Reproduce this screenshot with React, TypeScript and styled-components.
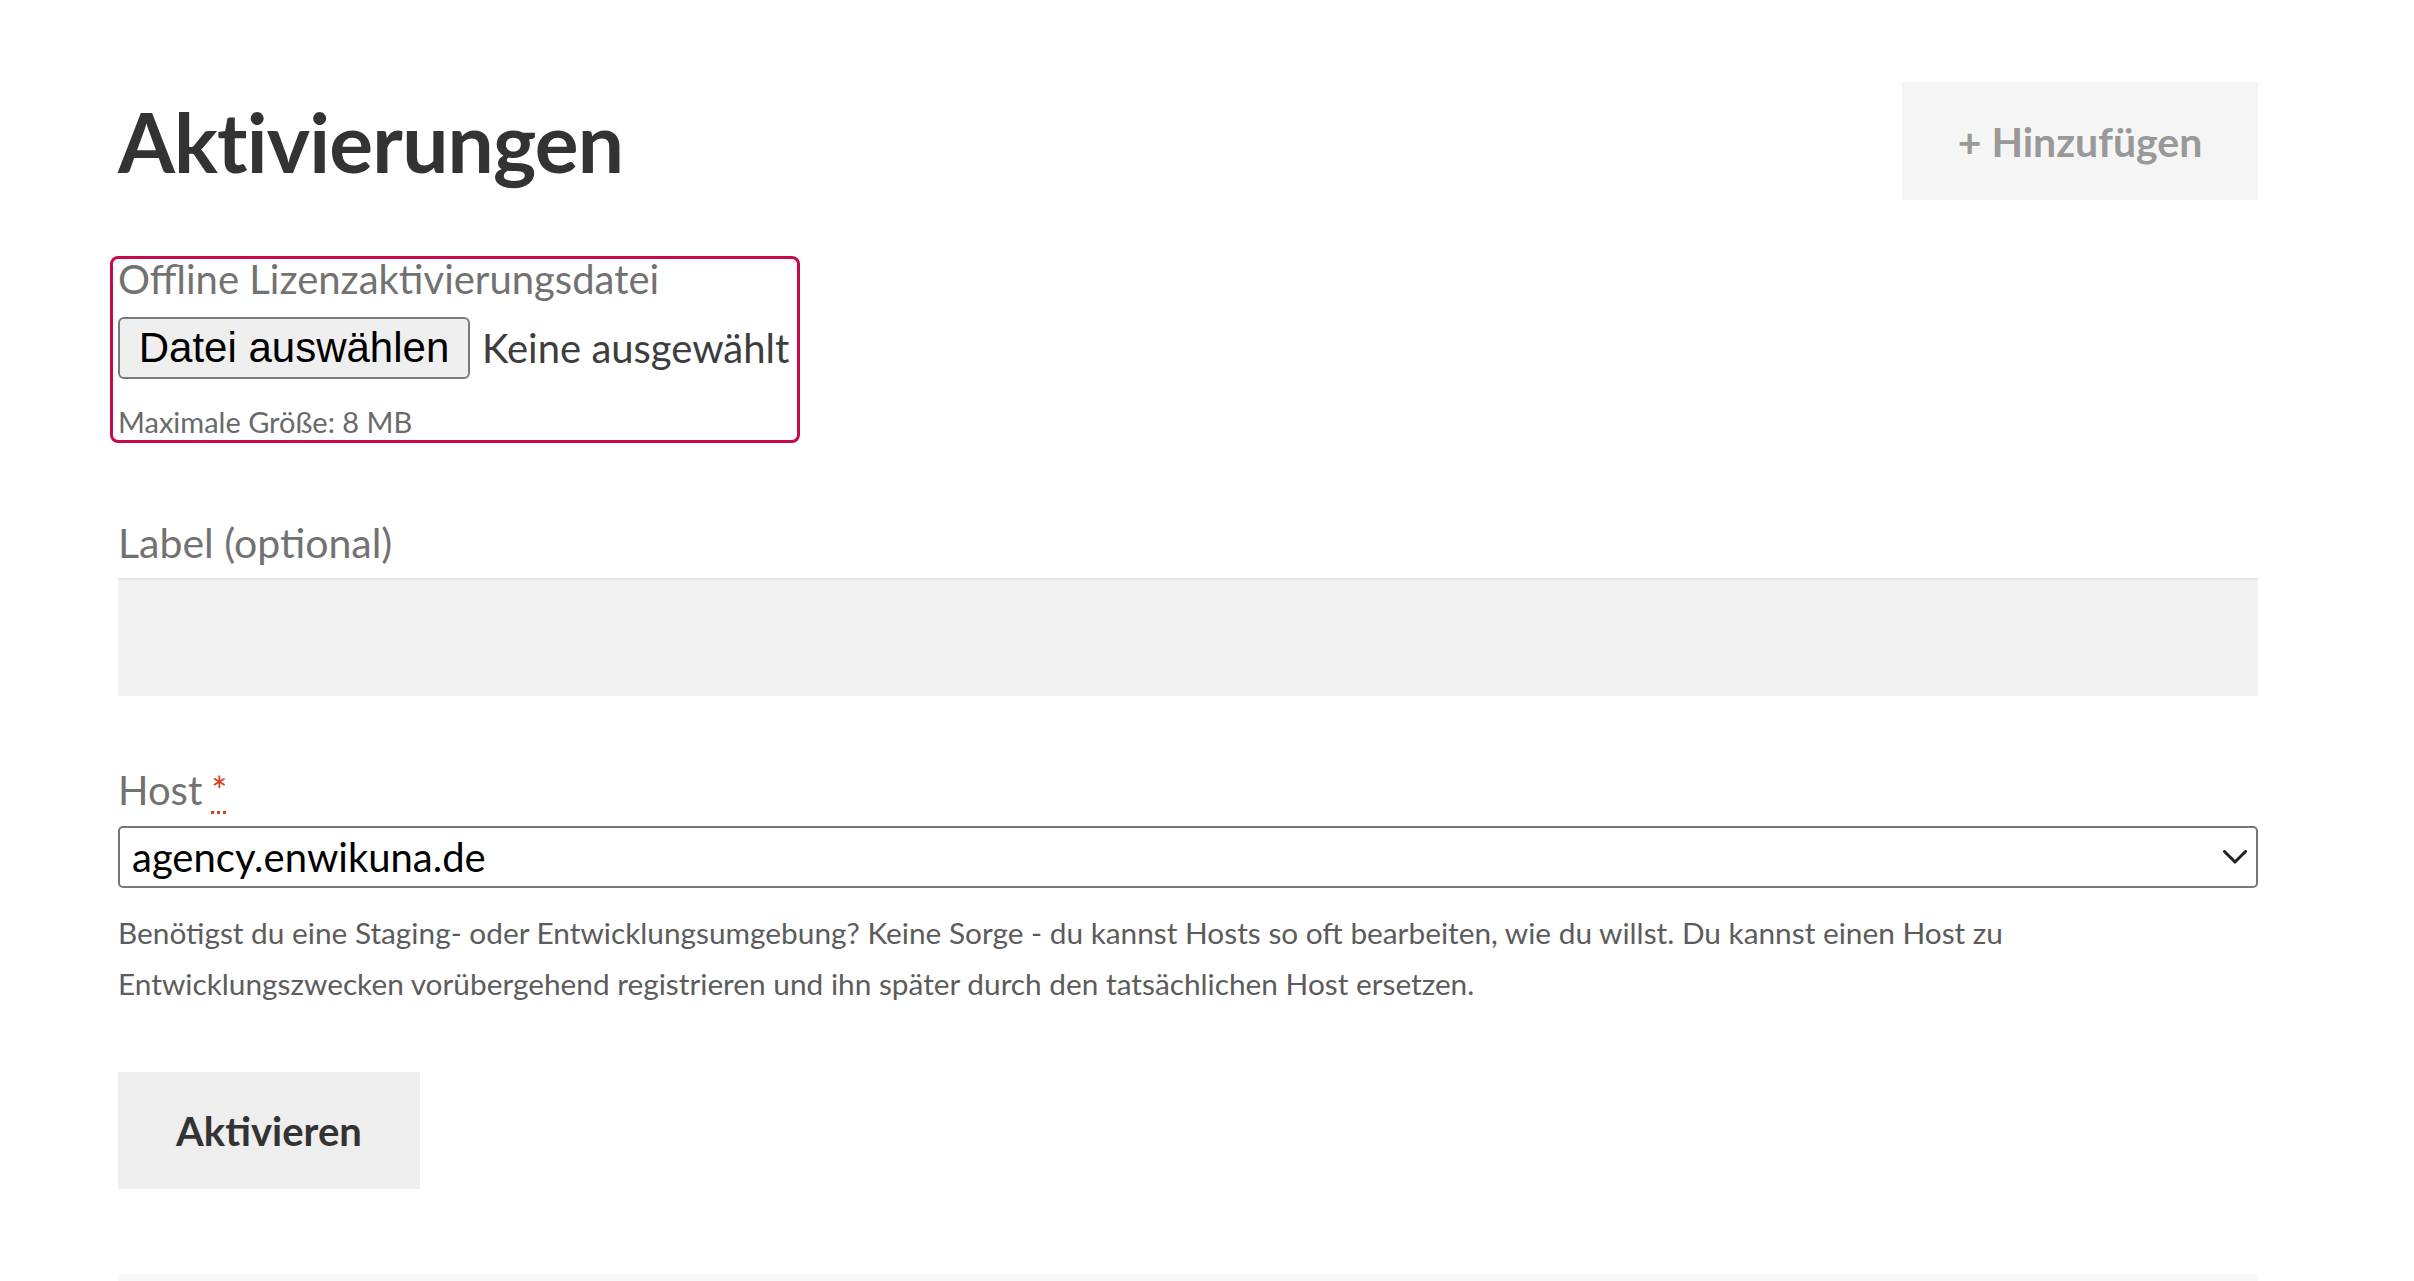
import React from 'react';
import styled, { createGlobalStyle } from 'styled-components';

const GlobalStyle = createGlobalStyle`
    html, body {
        margin: 0;
        padding: 0;
        background: #ffffff;
    }
    body {
        font-family: Lato, "Open Sans", "Noto Sans", sans-serif;
        color: #333333;
    }
`;

const Page = styled.main`
    padding: 82px 156px 0 118px;
    box-sizing: border-box;
    width: 100%;
`;

const Header = styled.header`
    display: flex;
    align-items: center;
    justify-content: space-between;
    height: 118px;
`;

const Title = styled.h1`
    margin: 0;
    font-size: 82px;
    font-weight: 700;
    line-height: 1;
    color: #333333;
    letter-spacing: -0.8px;
`;

const GhostButton = styled.button`
    width: 356px;
    height: 118px;
    border: none;
    background: #f5f5f5;
    color: #999999;
    font-family: inherit;
    font-size: 41px;
    font-weight: 700;
    cursor: pointer;
`;

const FileBox = styled.div`
    display: inline-flex;
    flex-direction: column;
    align-items: flex-start;
    margin-top: 56px;
    margin-left: -8px;
    padding: 0 8px 4px 5px;
    border: 3px solid #c8094f;
    border-radius: 8px;
`;

const FieldLabel = styled.label<{ $gap?: number; $size?: number }>`
    display: block;
    margin-top: ${(p) => p.$gap ?? 0}px;
    font-size: ${(p) => p.$size ?? 40}px;
    line-height: 1;
    color: #727272;
`;

const FileRow = styled.div`
    display: flex;
    align-items: center;
    gap: 12px;
    margin-top: 18px;
`;

const ChooseButton = styled.span`
    display: inline-flex;
    align-items: center;
    justify-content: center;
    box-sizing: border-box;
    width: 352px;
    height: 62px;
    border: 2px solid #7a7a7a;
    border-radius: 6px;
    background: #efefef;
    font-family: "Liberation Sans", Arial, sans-serif;
    font-size: 42px;
    color: #000000;
`;

const FileName = styled.span`
    font-size: 40px;
    color: #3d3d3d;
`;

const Hint = styled.div`
    margin-top: 28px;
    font-size: 29px;
    line-height: 1;
    color: #6a6a6a;
`;

const TextInput = styled.input`
    display: block;
    box-sizing: border-box;
    width: 100%;
    height: 118px;
    margin-top: 15px;
    border: none;
    background: #f2f2f2;
    box-shadow: inset 0 3px 2px -1px rgba(0, 0, 0, 0.06);
    font-family: inherit;
    font-size: 40px;
    padding: 0 20px;
    outline: none;
`;

const Required = styled.abbr`
    margin-left: 9px;
    color: #dd3b1c;
    text-decoration: underline dotted #dd3b1c;
    text-decoration-thickness: 3px;
    text-underline-offset: 6px;
    font-size: 38px;
`;

const SelectWrap = styled.div`
    position: relative;
    margin-top: 16px;
`;

const Select = styled.select`
    display: block;
    box-sizing: border-box;
    width: 100%;
    height: 62px;
    padding: 0 60px 0 12px;
    border: 2px solid #767676;
    border-radius: 5px;
    background: #ffffff;
    appearance: none;
    font-family: inherit;
    font-size: 40px;
    color: #000000;
    outline: none;
`;

const Chevron = styled.svg`
    position: absolute;
    right: 11px;
    top: 24px;
    width: 24px;
    height: 14px;
    pointer-events: none;
`;

const HelpText = styled.p`
    margin: 19px 0 0;
    font-size: 29.8px;
    line-height: 51px;
    color: #5c5c5c;
    max-width: 2000px;
`;

const SubmitButton = styled.button`
    display: block;
    width: 302px;
    height: 117px;
    margin-top: 63px;
    border: none;
    background: #eeeeee;
    color: #333333;
    font-family: inherit;
    font-size: 40px;
    font-weight: 700;
    cursor: pointer;
`;

const NextSection = styled.div`
    height: 40px;
    margin-top: 85px;
    background: #f8f8f8;
`;

const App = () => (
    <>
        <GlobalStyle />
        <Page>
            <Header>
                <Title>Aktivierungen</Title>
                <GhostButton type="button">+ Hinzufügen</GhostButton>
            </Header>

            <FileBox>
                <FieldLabel htmlFor="license-file">Offline Lizenzaktivierungsdatei</FieldLabel>
                <FileRow>
                    <ChooseButton id="license-file">Datei auswählen</ChooseButton>
                    <FileName>Keine ausgewählt</FileName>
                </FileRow>
                <Hint>Maximale Größe: 8 MB</Hint>
            </FileBox>

            <FieldLabel htmlFor="label" $gap={79} $size={41}>Label (optional)</FieldLabel>
            <TextInput id="label" type="text" />

            <FieldLabel htmlFor="host" $gap={74}>
                Host<Required title="erforderlich">*</Required>
            </FieldLabel>
            <SelectWrap>
                <Select id="host" defaultValue="agency.enwikuna.de">
                    <option value="agency.enwikuna.de">agency.enwikuna.de</option>
                </Select>
                <Chevron viewBox="0 0 24 14" fill="none">
                    <polyline points="1.5,1.5 12,12 22.5,1.5" stroke="#222" strokeWidth="3" strokeLinecap="round" strokeLinejoin="round" />
                </Chevron>
            </SelectWrap>
            <HelpText>
                Benötigst du eine Staging- oder Entwicklungsumgebung? Keine Sorge - du kannst Hosts so oft bearbeiten,
                wie du willst. Du kannst einen Host zu Entwicklungszwecken vorübergehend registrieren und ihn später
                durch den tatsächlichen Host ersetzen.
            </HelpText>

            <SubmitButton type="submit">Aktivieren</SubmitButton>
            <NextSection />
        </Page>
    </>
);

export default App;
